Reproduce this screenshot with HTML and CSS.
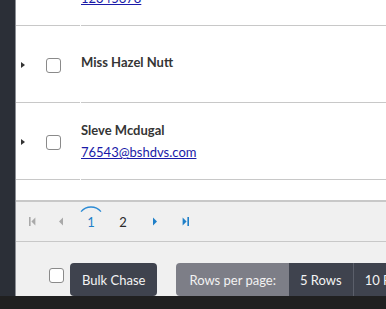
FILE: index.html
```html
<!DOCTYPE html>
<html>
<head>
  <meta charset="utf-8" />
  <meta name="viewport" content="width=device-width, initial-scale=1.0">
  <title>Chase list</title>
  <link rel="stylesheet" href="styles.css">
</head>
<body>

  <div class="app">
    <aside class="sidebar"></aside>

    <main class="main">
      <div class="grid-body">
        <div class="grid-rows">
          <div class="row">
            <div class="cell cell-select">
              <span class="expander"></span>
              <span class="check"></span>
            </div>
            <div class="cell cell-info">
              <span class="name">Mr Ima Placeholder</span>
              <a class="email" href="#">12345678</a>
            </div>
          </div>
          <div class="row">
            <div class="cell cell-select">
              <span class="expander"></span>
              <span class="check"></span>
            </div>
            <div class="cell cell-info single">
              <span class="name">Miss Hazel Nutt</span>
            </div>
          </div>
          <div class="row">
            <div class="cell cell-select">
              <span class="expander"></span>
              <span class="check"></span>
            </div>
            <div class="cell cell-info">
              <span class="name">Sleve Mcdugal</span>
              <a class="email" href="#">76543@bshdvs.com</a>
            </div>
          </div>
        </div>
      </div>

      <div class="pager">
        <span class="pager-btn narrow disabled">
          <svg width="8" height="9" viewBox="0 0 8 9"><rect x="0" y="0" width="1.6" height="9"/><path d="M6.4 0.5 L2.4 4.5 L6.4 8.5 Z"/></svg>
        </span>
        <span class="pager-btn narrow disabled">
          <svg width="8" height="9" viewBox="0 0 8 9"><path d="M6 0.5 L2 4.5 L6 8.5 Z"/></svg>
        </span>
        <span class="pager-btn page current">
          1
          <svg class="focus-arc" width="28" height="28" viewBox="0 0 28 28"><path d="M4.04 5.64 A13 13 0 0 1 23.96 5.64"/></svg>
        </span>
        <span class="pager-btn page">2</span>
        <span class="pager-btn active">
          <svg width="8" height="9" viewBox="0 0 8 9"><path d="M2 0.5 L6 4.5 L2 8.5 Z"/></svg>
        </span>
        <span class="pager-btn narrow active">
          <svg width="8" height="9" viewBox="0 0 8 9"><path d="M1.6 0.5 L5.6 4.5 L1.6 8.5 Z"/><rect x="6.4" y="0" width="1.6" height="9"/></svg>
        </span>
      </div>

      <div class="footer">
        <span class="check footer-check"></span>
        <button class="btn-dark">Bulk Chase</button>
        <div class="page-size">
          <span class="page-size-label">Rows per page:</span>
          <button class="btn-dark size-opt">5 Rows</button>
          <button class="btn-dark size-opt">10 Rows</button>
        </div>
      </div>
    </main>
  </div>

  <div class="bottom-strip"></div>

</body>
</html>
```

FILE: styles.css
```css
/* --- General Setup --- */
:root {
  --sidebar-bg: #2b2f37;
  --strip-bg: #202020;
  --line: #c8c8c8;
  --panel-bg: #f0f0f0;
  --text: #353535;
  --link: #1a1aa8;
  --accent: #1f7fc8;
  --btn-dark: #3f434e;
  --btn-gray: #7d7e87;
}
*, *::before, *::after {
  box-sizing: border-box;
}
html, body {
  margin: 0;
  height: 100%;
  overflow: hidden;
}
body {
  font-family: Lato, "Open Sans", Arial, sans-serif;
  font-size: 13px;
  color: var(--text);
  background: #ffffff;
  display: flex;
  flex-direction: column;
}

/* --- Layout --- */
.app {
  display: flex;
  height: 296px;
}
.sidebar {
  width: 16px;
  flex: none;
  background: var(--sidebar-bg);
  border-right: 1px solid #8c8f95;
}
.main {
  flex: 1;
  display: flex;
  flex-direction: column;
  min-width: 0;
}
.bottom-strip {
  height: 13px;
  background: var(--strip-bg);
}

/* --- Grid rows --- */
.grid-body {
  height: 200px;
  overflow: hidden;
  background: #ffffff;
}
.grid-rows {
  margin-top: -51px;
}
.row {
  display: grid;
  grid-template-columns: 64px 1fr;
  column-gap: 1px;
  height: 77px;
}
.cell {
  border-bottom: 1px solid var(--line);
  display: flex;
  align-items: center;
}
.cell-select {
  padding-left: 5px;
  gap: 21px;
}
.expander {
  width: 0;
  height: 0;
  border-left: 4px solid #333;
  border-top: 3px solid transparent;
  border-bottom: 3px solid transparent;
  margin-top: 1px;
}
.check {
  display: inline-block;
  width: 15px;
  height: 15px;
  border: 1px solid #8a8a8a;
  border-radius: 3px;
  background: #ffffff;
  margin-top: 2px;
}
.cell-info {
  flex-direction: column;
  align-items: flex-start;
  justify-content: center;
  gap: 4px;
}
.cell-info.single {
  padding-bottom: 5px;
}
.name {
  font-weight: bold;
  line-height: 18px;
}
.email {
  color: var(--link);
  line-height: 18px;
}

/* --- Pager --- */
.pager {
  height: 42px;
  flex: none;
  background: var(--panel-bg);
  border-top: 2px solid var(--line);
  border-bottom: 1px solid var(--line);
  display: flex;
  align-items: center;
  padding-left: 3px;
}
.pager-btn {
  position: relative;
  width: 32px;
  height: 100%;
  display: flex;
  align-items: center;
  justify-content: center;
}
.pager-btn.narrow {
  width: 28px;
}
.pager-btn svg {
  fill: currentColor;
}
.pager-btn.disabled {
  color: #a9a9a9;
}
.pager-btn.active {
  color: var(--accent);
}
.pager-btn.page {
  font-size: 13px;
  color: #2a2a2a;
}
.pager-btn.current {
  color: var(--accent);
}
.focus-arc {
  position: absolute;
  left: 2px;
  top: 4px;
}
.pager-btn .focus-arc {
  fill: none;
  stroke: #2a8ad4;
  stroke-width: 1.3;
}

/* --- Footer --- */
.footer {
  height: 54px;
  flex: none;
  background: var(--panel-bg);
  display: flex;
  align-items: flex-start;
  padding: 21px 0 0 33px;
  overflow: hidden;
}
.footer-check {
  margin-top: 5px;
  margin-right: 6px;
  flex: none;
}
.btn-dark {
  font-family: inherit;
  font-size: 13px;
  color: #f4f4f4;
  background: var(--btn-dark);
  border: none;
  border-radius: 4px;
  height: 33px;
  padding: 0 12px;
  flex: none;
}
.page-size {
  display: flex;
  margin-left: 19px;
  flex: none;
  border-radius: 4px;
  overflow: hidden;
  height: 33px;
}
.page-size-label {
  background: var(--btn-gray);
  color: #f2f2f2;
  padding: 0 13px;
  display: flex;
  align-items: center;
}
.size-opt {
  border-radius: 0;
  padding: 0 11px;
}
.size-opt + .size-opt {
  border-left: 1px solid #5b5f6a;
}
```
